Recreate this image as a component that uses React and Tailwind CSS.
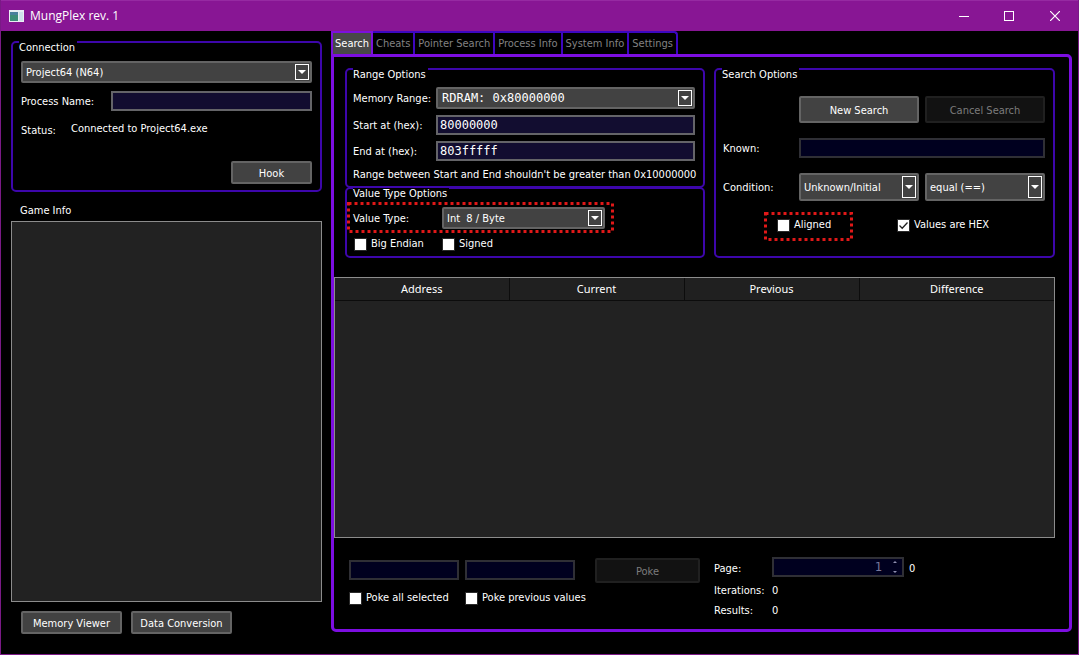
import React, { useState } from 'react';
import clsx from 'clsx';

const tabs = ['Search', 'Cheats', 'Pointer Search', 'Process Info', 'System Info', 'Settings'];

const columns = [
  { title: 'Address', width: 'w-[174px]' },
  { title: 'Current', width: 'w-[175px]' },
  { title: 'Previous', width: 'w-[175px]' },
  { title: 'Difference', width: '' },
];

const Group = ({ title, className, children }) => (
  <fieldset className={clsx('min-w-0 border-2 border-[#3d06ab] rounded-[5px]', className)}>
    {/* the caption hangs below the top edge, only the edge itself is interrupted */}
    <legend className="ml-1.5 h-0.5 pr-0.5 leading-[14px] whitespace-nowrap">{title}</legend>
    {children}
  </fieldset>
);

const Label = ({ htmlFor, className, children }) => (
  <label htmlFor={htmlFor} className={clsx('pt-0.5 whitespace-nowrap', className)}>{children}</label>
);

const Select = ({ id, label, options, className, mono }) => (
  <div className={clsx('relative', className)}>
    <select
      id={id}
      aria-label={label}
      className={clsx(
        'block w-full h-full appearance-none rounded-[2px] border-2 border-[#646464] bg-[#424242] pr-5 text-white outline-none',
        mono ? 'pl-1 text-[12px] font-["DejaVu_Sans_Mono",monospace]' : 'pl-[3px] pt-0.5'
      )}
    >
      {options.map((o) => <option key={o}>{o}</option>)}
    </select>
    <span className="pointer-events-none absolute inset-y-[3px] right-[3px] w-3.5 border border-white flex items-center justify-center">
      <svg width="8" height="4" viewBox="0 0 8 4" fill="#fff"><path d="M0 0h8L4 4z" /></svg>
    </span>
  </div>
);

const TextBox = ({ disabled, className, ...props }) => (
  <input
    type="text"
    disabled={disabled}
    className={clsx(
      'block min-w-0 h-5 border-2 px-0.5 outline-none text-[12px] font-["DejaVu_Sans_Mono",monospace]',
      disabled ? 'border-[#2f2f35] bg-[#00001f] text-[#77779a]' : 'border-[#646468] bg-[#120d30] text-white',
      className
    )}
    {...props}
  />
);

const Button = ({ disabled, className, children }) => (
  <button
    type="button"
    disabled={disabled}
    className={clsx(
      'rounded-[2px] border-2 pt-0.5 whitespace-nowrap',
      disabled ? 'border-[#202020] bg-[#121212] text-[#7c7c7c]' : 'border-[#646464] bg-[#424242] text-white',
      className
    )}
  >
    {children}
  </button>
);

const Check = ({ label, checked, className }) => (
  <label className={clsx('relative flex items-center gap-1 h-4 whitespace-nowrap', className)}>
    <input type="checkbox" defaultChecked={checked} className="peer appearance-none w-[13px] h-[13px] shrink-0 border border-[#2a2a2a] bg-white" />
    <svg className="hidden peer-checked:block absolute left-0 top-[2px] pointer-events-none" width="13" height="13" viewBox="0 0 13 13" fill="none" stroke="#222" strokeWidth="1.3">
      <path d="M2.5 6.5l2.7 2.7L10.5 3.5" />
    </svg>
    {label}
  </label>
);

// red dotted marker drawn around a control
const Marker = ({ width, height, className }) => (
  <svg className={clsx('absolute pointer-events-none', className)} width={width} height={height} fill="none" stroke="#e01818" strokeWidth="3" strokeDasharray="3 3">
    <rect x="1.5" y="1.5" width={width - 3} height={height - 3} />
  </svg>
);

const TitleBar = () => (
  <header className="h-[31px] shrink-0 bg-[#881694] border-t border-[#962aa2] flex items-center pl-2 text-white">
    <svg width="15" height="12" viewBox="0 0 15 12">
      <rect width="15" height="12" fill="#e9eef4" />
      <rect x="1" y="2" width="8" height="9" fill="#3d8c78" />
      <rect x="1" y="2" width="8" height="3" fill="#4a7f9c" />
      <rect x="10" y="2" width="4" height="9" fill="#cfe0ea" />
    </svg>
    <h1 className="ml-1.5 text-[12px] font-['Open_Sans',sans-serif]">MungPlex rev. 1</h1>
    <div className="ml-auto flex h-7">
      <button type="button" aria-label="Minimize" className="w-[45px] flex items-center justify-center">
        <svg width="10" height="10" stroke="#fff"><path d="M0 5.5h10" /></svg>
      </button>
      <button type="button" aria-label="Maximize" className="w-[45px] flex items-center justify-center">
        <svg width="10" height="10" stroke="#fff" fill="none"><rect x=".5" y=".5" width="9" height="9" /></svg>
      </button>
      <button type="button" aria-label="Close" className="w-[47px] flex items-center justify-center">
        <svg width="10" height="10" stroke="#fff" strokeWidth="1.2"><path d="M0 0l10 10M10 0L0 10" /></svg>
      </button>
    </div>
  </header>
);

const Connection = () => (
  <Group title="Connection" className="h-[151px]">
    <div className="px-2 pt-[18px] flex flex-col">
      <Select label="Emulator" options={['Project64 (N64)', 'Dolphin (GameCube / Wii)']} className="h-[22px]" />
      <div className="mt-2 flex items-center">
        <Label htmlFor="process" className="w-[90px]">Process Name:</Label>
        <TextBox id="process" className="flex-1" />
      </div>
      <div className="mt-2.5 h-4 flex">
        <span className="w-[50px] pt-0.5">Status:</span>
        <span>Connected to Project64.exe</span>
      </div>
      <Button className="mt-6 self-end w-[81px] h-[23px]">Hook</Button>
    </div>
  </Group>
);

const RangeOptions = () => (
  <Group title="Range Options" className="h-[120px]">
    <div className="pl-1.5 pr-2 pt-[17px] grid grid-cols-[83px_1fr] items-center">
      <Label htmlFor="range">Memory Range:</Label>
      <Select id="range" mono options={['RDRAM: 0x80000000']} className="h-[22px]" />
      <Label htmlFor="start" className="mt-1.5">Start at (hex):</Label>
      <TextBox id="start" defaultValue="80000000" className="mt-1.5 w-full" />
      <Label htmlFor="end" className="mt-1.5">End at (hex):</Label>
      <TextBox id="end" defaultValue="803fffff" className="mt-1.5 w-full" />
      <p className="col-span-2 mt-1.5 whitespace-nowrap">Range between Start and End shouldn&apos;t be greater than 0x10000000</p>
    </div>
  </Group>
);

const ValueTypeOptions = () => (
  <Group title="Value Type Options" className="h-[71px] -mt-px">
    <div className="pl-1.5 pr-2 pt-[18px]">
      <div className="relative flex items-center">
        <Label htmlFor="value-type" className="w-[89px]">Value Type:</Label>
        <Select id="value-type" options={['Int \u00a08 / Byte', 'Int 16 / 2 Bytes', 'Int 32 / 4 Bytes']} className="w-[163px] h-[22px]" />
        <Marker width={267} height={31} className="-left-1.5 -top-[5px]" />
      </div>
      <div className="mt-[7px] pl-px flex">
        <Check label="Big Endian" className="w-[88px]" />
        <Check label="Signed" />
      </div>
    </div>
  </Group>
);

const SearchOptions = () => (
  <Group title="Search Options" className="flex-1">
    <div className="pl-[7px] pr-2 pt-[26px] grid grid-cols-[76px_1fr_1fr] items-center">
      <Button className="col-start-2 h-[27px] mr-[3px]">New Search</Button>
      <Button disabled className="h-[27px] ml-[3px]">Cancel Search</Button>
      <Label htmlFor="known" className="mt-[15px]">Known:</Label>
      <TextBox id="known" disabled className="col-span-2 mt-[15px]" />
      <Label htmlFor="condition" className="mt-[15px]">Condition:</Label>
      <Select id="condition" options={['Unknown/Initial', 'Known']} className="h-7 mt-[15px] mr-[3px]" />
      <Select label="Comparison" options={['equal (==)', 'not equal (!=)']} className="h-7 mt-[15px] ml-[3px]" />
    </div>
    <div className="mt-4 pl-[61px] flex">
      <div className="relative w-[120px]">
        <Check label="Aligned" />
        <Marker width={89} height={29} className="-left-[13px] -top-[5px]" />
      </div>
      <Check label="Values are HEX" checked />
    </div>
  </Group>
);

const Results = () => (
  <div className="mt-[19px] mr-3.5 flex-1 border border-[#8c8c8c] bg-[#222]">
    <table className="w-full table-fixed border-collapse">
      <thead>
        <tr>
          {columns.map((c) => (
            <th key={c.title} className={clsx('h-[22px] p-0 border-r last:border-r-0 border-b border-[#0c0c0c] bg-[#202020] font-normal font-["Noto_Sans",sans-serif]', c.width)}>
              {c.title}
            </th>
          ))}
        </tr>
      </thead>
    </table>
  </div>
);

const Poke = () => (
  <div className="mt-[19px] ml-[15px] h-[72px] flex items-start">
    <div className="pt-[3px] grid grid-cols-[116px_110px] gap-y-2.5">
      <TextBox disabled aria-label="Poke value" className="w-[110px]" />
      <TextBox disabled aria-label="Poke argument" className="w-[110px]" />
      <Check label="Poke all selected" />
      <Check label="Poke previous values" />
    </div>
    <Button disabled className="mt-px ml-5 w-[105px] h-[25px]">Poke</Button>
    <div className="ml-3.5 grid grid-cols-[58px_1fr] leading-5">
      <Label htmlFor="page">Page:</Label>
      <div className="flex pb-0.5">
        <div className="relative">
          <TextBox id="page" disabled defaultValue="1" className="w-[132px] pr-5 text-right" />
          <svg className="absolute right-1.5 top-[3px]" width="6" height="14" fill="#8f8fb0"><path d="M1 3l2-2 2 2zM1 11l2 2 2-2z" /></svg>
        </div>
        <span className="ml-[5px] pt-0.5">0</span>
      </div>
      <span>Iterations:</span>
      <span>0</span>
      <span>Results:</span>
      <span>0</span>
    </div>
  </div>
);

const App = () => {
  const [active, setActive] = useState('Search');

  return (
    <div className="min-h-screen flex flex-col bg-black border-x border-b border-[#7a1a86] text-white text-[11px] leading-4 font-['DejaVu_Sans_Condensed',sans-serif]">
      <TitleBar />
      <main className="flex-1 flex pl-2.5 pr-1.5">

        {/* Left column */}
        <div className="w-[311px] shrink-0 pt-2.5 pb-5 flex flex-col">
          <Connection />
          <h2 className="mt-2.5 ml-[9px] pt-px">Game Info</h2>
          <div className="mt-0.5 flex-1 border border-[#8c8c8c] bg-[#222]" />
          <div className="mt-[9px] ml-2.5 flex gap-[9px]">
            <Button className="w-[101px] h-[23px]">Memory Viewer</Button>
            <Button className="w-[101px] h-[23px]">Data Conversion</Button>
          </div>
        </div>

        {/* Tabs and active page */}
        <div className="ml-[9px] flex-1 min-w-0 pb-[22px] flex flex-col">
          <div role="tablist" className="flex h-[23px]">
            {tabs.map((t) => (
              <button
                key={t}
                type="button"
                role="tab"
                aria-selected={t === active}
                onClick={() => setActive(t)}
                className={clsx(
                  'whitespace-nowrap border-t-2 border-r-2 last:rounded-tr-[4px]',
                  t === active ? 'bg-[#484848] border-[#7c10dc] border-l-2 px-0.5 text-white' : 'border-[#3d06c0] px-[3px] text-[#828282]'
                )}
              >
                {t}
              </button>
            ))}
          </div>
          <div role="tabpanel" className="flex-1 flex flex-col border-3 border-[#7c0ee0] rounded-b-[5px] rounded-tr-[5px]">
            <div className="mt-[11px] ml-[11px] mr-3.5 flex gap-[9px]">
              <div className="w-[360px]">
                <RangeOptions />
                <ValueTypeOptions />
              </div>
              <SearchOptions />
            </div>
            <Results />
            <Poke />
          </div>
        </div>

      </main>
    </div>
  );
};

export default App;
